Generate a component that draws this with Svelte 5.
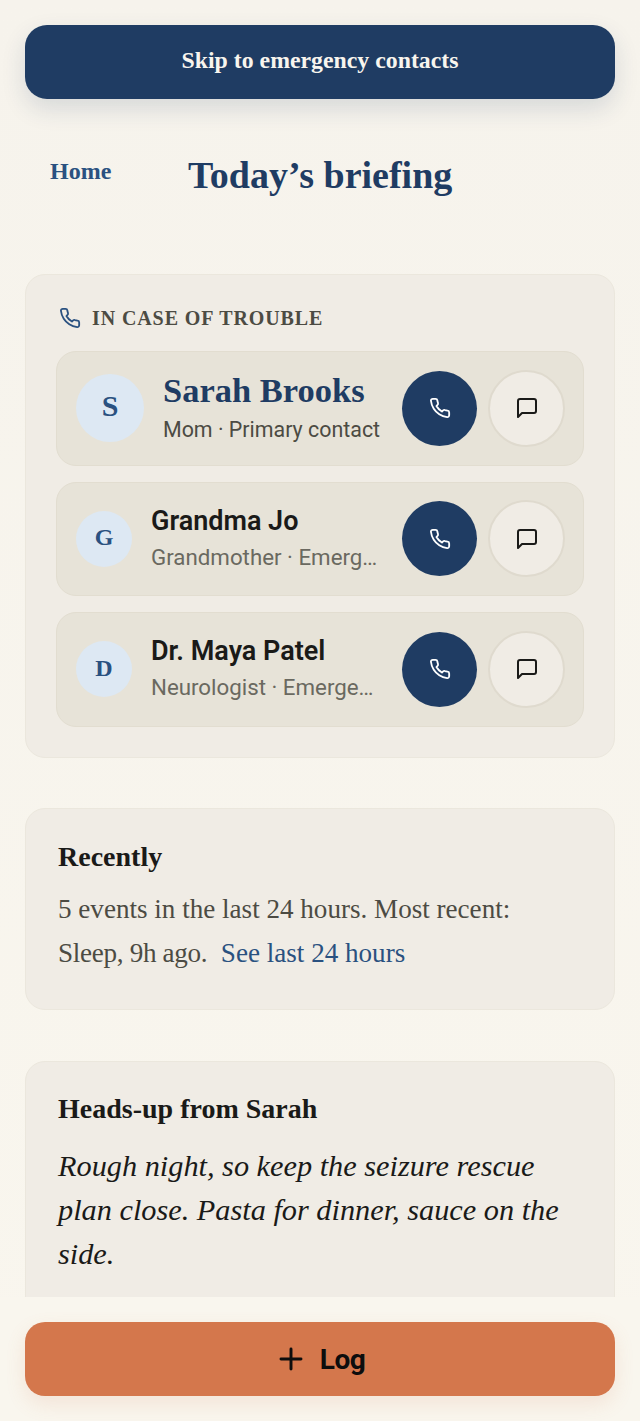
<script>
    const contacts = [
        { name: 'Sarah Brooks', initial: 'S', role: 'Mom · Primary contact', primary: true },
        { name: 'Grandma Jo', initial: 'G', role: 'Grandmother · Emergency contact' },
        { name: 'Dr. Maya Patel', initial: 'D', role: 'Neurologist · Emergency contact' }
    ];
    const phone = 'M22 16.9v3a2 2 0 0 1-2.2 2 19.8 19.8 0 0 1-8.6-3.1 19.5 19.5 0 0 1-6-6 19.8 19.8 0 0 1-3.1-8.7A2 2 0 0 1 4.1 2h3a2 2 0 0 1 2 1.7c.1 1 .4 1.9.7 2.8a2 2 0 0 1-.5 2.1L8.1 9.9a16 16 0 0 0 6 6l1.3-1.3a2 2 0 0 1 2.1-.4c.9.3 1.8.5 2.8.7a2 2 0 0 1 1.7 2z';
</script>

<div class="page">
    <a class="skip" href="#contacts">Skip to emergency contacts</a>

    <header class="top">
        <a class="home" href="#home">Home</a>
        <h1>Today’s briefing</h1>
    </header>

    <section class="card trouble" id="contacts">
        <h2 class="eyebrow">
            <svg width="22" height="22" viewBox="0 0 24 24" fill="none" stroke="#2a5180" stroke-width="2" stroke-linecap="round" stroke-linejoin="round"><path d={phone} /></svg>
            IN CASE OF TROUBLE
        </h2>
        <div class="rows">
            {#each contacts as c}
                <div class="row" class:primary={c.primary}>
                    <div class="avatar">{c.initial}</div>
                    <div class="who">
                        <div class="name">{c.name}</div>
                        <div class="role">{c.role}</div>
                    </div>
                    <button class="call" aria-label="Call {c.name}">
                        <svg width="22" height="22" viewBox="0 0 24 24" fill="none" stroke="#fff" stroke-width="2" stroke-linecap="round" stroke-linejoin="round"><path d={phone} /></svg>
                    </button>
                    <button class="msg" aria-label="Message {c.name}">
                        <svg width="24" height="24" viewBox="0 0 24 24" fill="none" stroke="#1a1a18" stroke-width="2" stroke-linecap="round" stroke-linejoin="round"><path d="M21 15a2 2 0 0 1-2 2H7l-4 4V5a2 2 0 0 1 2-2h14a2 2 0 0 1 2 2z" /></svg>
                    </button>
                </div>
            {/each}
        </div>
    </section>

    <section class="card recent">
        <h3>Recently</h3>
        <p>5 events in the last 24 hours. Most recent: <span class="ago">Sleep, 9h ago.</span> &nbsp;<a href="#day">See last 24 hours</a></p>
    </section>

    <section class="card note">
        <h3>Heads-up from Sarah</h3>
        <p>Rough night, so keep the seizure rescue plan close. Pasta for dinner, sauce on the side.</p>
    </section>
</div>

<div class="dock">
    <button class="log">
        <svg width="32" height="32" viewBox="0 0 24 24" fill="none" stroke="#0d0d0d" stroke-width="2.2" stroke-linecap="round"><path d="M12 4.5v15M4.5 12h15" /></svg>
        <span>Log</span>
    </button>
</div>

<style>
    :global(html), :global(body) {
        background: linear-gradient(#f6f3ec, #f9f6ee);
        margin: 0;
    }
    .page {
        box-sizing: border-box;
        height: 1421px;
        overflow: hidden;
        padding: 25px 25px 0;
        display: flex;
        flex-direction: column;
    }
    .skip {
        flex: none;
        height: 74px;
        padding-bottom: 4px;
        box-sizing: border-box;
        display: flex;
        align-items: center;
        justify-content: center;
        border-radius: 22px;
        background: #1f3c63;
        color: #f8f5ee;
        font: 700 23.8px "Liberation Serif", serif;
        text-decoration: none;
        box-shadow: 0 10px 24px rgba(31, 60, 99, 0.14);
    }
    .top {
        flex: none;
        height: 152px;
        margin-top: 23px;
        display: flex;
        align-items: flex-start;
        padding-left: 25px;
    }
    .home {
        margin-top: 36px;
        width: 138px;
        color: #2a5180;
        font: 700 24px "Liberation Serif", serif;
        text-decoration: none;
    }
    h1 {
        margin: 31px 0 0;
        color: #1f3c63;
        font: 700 38px "Liberation Serif", serif;
    }
    .card {
        flex: none;
        box-sizing: border-box;
        border: 1px solid #ebe7dd;
        border-radius: 20px;
        background: #f0ece5;
    }
    .trouble {
        height: 483.5px;
        padding: 30px 30px 0;
    }
    .eyebrow {
        margin: 0 0 20px 3px;
        height: 26px;
        display: flex;
        align-items: center;
        gap: 11px;
        color: #4c4b43;
        font: 700 20px "Liberation Serif", serif;
        letter-spacing: 0.9px;
    }
    .rows {
        display: flex;
        flex-direction: column;
        gap: 16px;
    }
    .row {
        box-sizing: border-box;
        height: 114.5px;
        padding: 0 18px 0 19px;
        display: flex;
        align-items: center;
        border: 1px solid #e2ddd0;
        border-radius: 20px;
        background: #e7e3d8;
    }
    .avatar {
        flex: none;
        box-sizing: border-box;
        width: 56px;
        height: 56px;
        padding-bottom: 2px;
        margin-right: 19px;
        border-radius: 50%;
        display: flex;
        align-items: center;
        justify-content: center;
        background: #dde8f3;
        color: #2a5180;
        font: 700 24px "Liberation Serif", serif;
    }
    .primary .avatar {
        width: 68px;
        height: 68px;
        padding-bottom: 5px;
        font-size: 30px;
    }
    .who {
        flex: 1;
        min-width: 0;
    }
    .name {
        color: #1a1a18;
        font: 600 27px "Roboto", sans-serif;
        line-height: 36px;
        margin-top: -3px;
    }
    .primary .name {
        margin-top: 0;
        color: #1f3c63;
        font: 700 34.5px/38px "Liberation Serif", serif;
    }
    .role {
        margin-top: 3px;
        padding-right: 4px;
        color: #6a6960;
        font: 400 22.3px/30px "Roboto", sans-serif;
        white-space: nowrap;
        overflow: hidden;
        text-overflow: ellipsis;
    }
    .primary .role {
        margin-top: 6px;
        padding-right: 0;
        color: #4c4b43;
        font-size: 21.4px;
    }
    button {
        padding: 0;
        display: flex;
        align-items: center;
        justify-content: center;
        cursor: pointer;
    }
    .call {
        flex: none;
        width: 75px;
        height: 75px;
        margin: 0 11px 0 18px;
        border: 0;
        border-radius: 50%;
        background: #1f3c63;
    }
    .msg {
        flex: none;
        width: 77px;
        height: 77px;
        border: 2px solid #dfdace;
        border-radius: 50%;
        background: #f0ece5;
    }
    .recent {
        height: 202px;
        margin-top: 50.5px;
        padding: 28px 32px 0;
    }
    .note {
        height: 300px;
        margin-top: 50.5px;
        padding: 27px 32px 0;
    }
    h3 {
        margin: 0;
        color: #1a1a18;
        font: 700 28px/40px "Liberation Serif", serif;
    }
    .recent p {
        margin: 10px 0 0;
        color: #4c4b43;
        font: 400 27.1px/44px "Liberation Serif", serif;
    }
    .ago {
        letter-spacing: -0.3px;
    }
    .recent a {
        color: #2a5180;
        text-decoration: none;
    }
    .note p {
        margin: 15px 0 0;
        color: #1a1a18;
        font: italic 400 30.3px/44px "Liberation Serif", serif;
    }
    .dock {
        position: fixed;
        left: 0;
        right: 0;
        bottom: 0;
        height: 124px;
        box-sizing: border-box;
        padding: 25px 25px 0;
        background: #f9f6ee;
    }
    .log {
        width: 100%;
        height: 74px;
        gap: 13px;
        border: 0;
        border-radius: 20px;
        background: #d4774c;
        color: #0d0d0d;
        font: 700 28px "Roboto", sans-serif;
        letter-spacing: -0.5px;
        box-shadow: 0 8px 20px rgba(212, 119, 76, 0.14);
    }
    .log span {
        padding-top: 1px;
    }
</style>
